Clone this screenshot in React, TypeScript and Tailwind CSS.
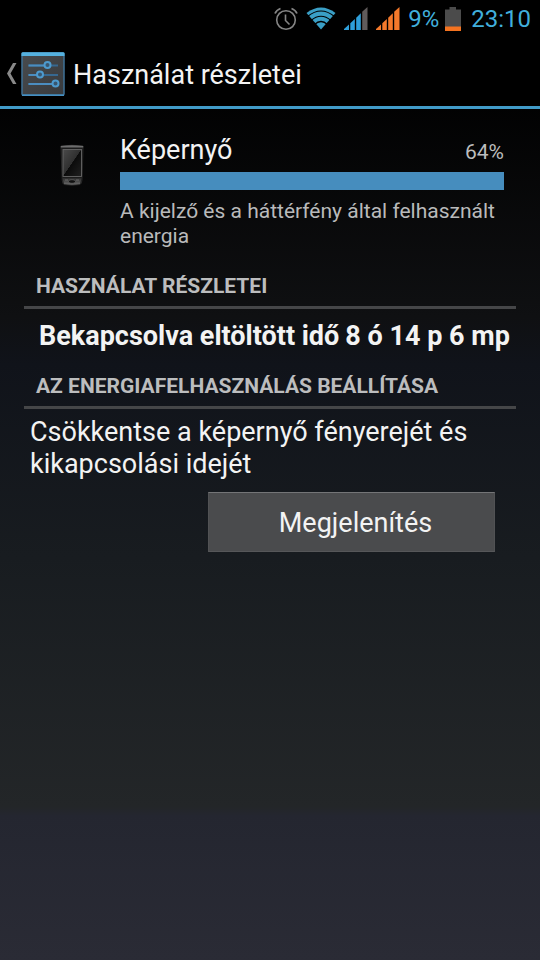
import type { ReactNode } from "react";

function AlarmIcon() {
  return (
    <svg className="h-6 w-6" viewBox="0 0 24 24" fill="none" stroke="#858585" strokeWidth="1.6" aria-hidden="true">
      <circle cx="12" cy="13" r="9.3" />
      <path d="M11.5 7.5v6l4 4" />
      <path d="M1 6.5Q2.500 3 6.500 1.500M23 6.500Q21.500 3 17.500 1.500" strokeWidth="1.8" />
    </svg>
  );
}

function WifiIcon() {
  return (
    <svg className="h-6 w-[30px]" viewBox="0 0 30 24" aria-hidden="true">
      <path d="M.5 6Q15-5 29.500 6L15 22.500Z" fill="#3a9fc6" />
      <g fill="none" stroke="#000" strokeWidth="1.200">
        <path d="M1.500 9.500Q15-1.500 28.500 9.500" />
        <path d="M5 13.500Q15 5 25 13.500" />
        <path d="M8.500 17.500Q15 11.500 21.500 17.500" />
      </g>
    </svg>
  );
}

function SignalIcon({ color, last }: { color: string; last: string }) {
  return (
    <svg className="h-6 w-6" viewBox="0 0 24 24" aria-hidden="true">
      <path d="M0 23V22L5 17.500V23Z" fill={color} />
      <path d="M6.300 23V16.300L10.800 12V23Z" fill={color} />
      <path d="M12.200 23V10.700L16.800 6.200V23Z" fill={color} />
      <path d="M18.200 23V4.800L23.500 0V23Z" fill={last} />
    </svg>
  );
}

function BatteryIcon() {
  return (
    <svg className="h-6 w-4" viewBox="0 0 16 24" aria-hidden="true">
      <path d="M0 2.500H4.500V0H11V2.500H16V24H0Z" fill="#4b4b4b" />
      <path d="M0 19.500H16V24H0Z" fill="#f47320" />
    </svg>
  );
}

function SettingsIcon() {
  return (
    <svg className="h-11 w-11" viewBox="0 0 44 44" aria-hidden="true">
      <defs>
        <linearGradient id="panel" x1="0" y1="0" x2="1" y2="1">
          <stop offset="0" stopColor="#484b4e" />
          <stop offset="1" stopColor="#383a3d" />
        </linearGradient>
      </defs>
      <rect x="1" y="1" width="42" height="42" rx="1" fill="url(#panel)" stroke="#3f7197" strokeWidth="1.500" />
      <path d="M.5 4V1.500Q.5 .3 2 .3H42Q43.500 .3 43.500 1.500V4Z" fill="#55b1df" />
      <path d="M1 43.200H43" stroke="#458fc2" strokeWidth="1.400" />
      <g stroke="#376890" strokeWidth="1.800">
        <path d="M7.500 13.500H37M7.500 23H37M7.500 32H37" />
      </g>
      <g stroke="#4b8dc0" strokeWidth="1.800">
        <path d="M7.500 13.500H24M7.500 23H16M7.500 32H32" />
      </g>
      <g fill="#39566f" stroke="#4d9ace" strokeWidth="2">
        <circle cx="26.500" cy="13" r="3" />
        <circle cx="19" cy="22.500" r="3" />
        <circle cx="34.500" cy="31.500" r="3" />
      </g>
    </svg>
  );
}

function PhoneIcon() {
  return (
    <svg className="h-11 w-6" viewBox="0 0 24 44" aria-hidden="true">
      <defs>
        <linearGradient id="screen" x1="0" y1="0" x2="1" y2="1">
          <stop offset="0" stopColor="#4a4a4a" />
          <stop offset=".49" stopColor="#303030" />
          <stop offset=".5" stopColor="#0b0b0b" />
          <stop offset="1" stopColor="#202020" />
        </linearGradient>
        <linearGradient id="base" x1="0" y1="0" x2="0" y2="1">
          <stop offset="0" stopColor="#2a2a2a" />
          <stop offset="1" stopColor="#6a6a6a" />
        </linearGradient>
      </defs>
      <path d="M1 2Q12 .5 23 2V5L22 36Q21.500 40 20 40.500Q12 42 4 40.500Q2.500 40 2.200 36L1 5Z" fill="#1c1c1c" stroke="#2c2c2c" strokeWidth=".8" />
      <path d="M.8 2Q12 .5 23.200 2V3.500H.8Z" fill="#6d6d6d" />
      <rect x="3" y="5.500" width="18.500" height="27" fill="url(#screen)" stroke="#666" strokeWidth=".9" />
      <path d="M2.500 34H21.500L20 40Q12 41.500 4 40Z" fill="url(#base)" />
      <ellipse cx="12" cy="37.500" rx="3.500" ry="1.800" fill="#111" stroke="#777" strokeWidth=".5" />
      <path d="M5 36H8M16 36H19" stroke="#777" strokeWidth=".8" />
    </svg>
  );
}

function SectionTitle({ children }: { children: ReactNode }) {
  return (
    <h2 className="mx-6 h-10 border-b-3 border-[#454648] px-3 text-[21px] leading-[34px] font-bold text-[#bcbdbe]">
      {children}
    </h2>
  );
}

export default function App() {
  return (
    <div className="flex min-h-screen flex-col bg-[linear-gradient(to_bottom,#000_8%,#0f1012_33%,#10131a_38%,#181c20_58%,#232628_84%,#242630_85%,#2a2b35_100%)] font-['Roboto','Liberation_Sans',sans-serif] text-[#f3f3f3]">
      <div className="flex h-[38px] items-center justify-end bg-black pr-[9px] text-[24px] text-[#41afdc]">
        <div className="flex items-center gap-2">
          <AlarmIcon />
          <WifiIcon />
          <SignalIcon color="#2e9fda" last="#605b5b" />
          <SignalIcon color="#f4792b" last="#f4792b" />
          <div className="flex items-center gap-[6px]">
            <span>9%</span>
            <BatteryIcon />
          </div>
        </div>
        <time className="ml-[10px]">23:10</time>
      </div>

      <header className="flex h-[71px] items-center border-b-3 border-[#419bc8] bg-black pt-1 pl-[6px]">
        <button type="button" aria-label="Vissza" className="flex items-center gap-1">
          <svg className="h-6 w-[11px]" viewBox="0 0 11 24" aria-hidden="true">
            <path d="M7 1H10.500L4.500 11.500L10.500 22H7L1 11.500Z" fill="#898989" />
          </svg>
          <SettingsIcon />
        </button>
        <h1 className="ml-2 pt-[2px] text-[27px]">Használat részletei</h1>
      </header>

      <main className="flex flex-col">
        <section className="flex pt-6 pr-9 pl-[60px]">
          <div className="w-[60px] shrink-0 pt-[11px]">
            <PhoneIcon />
          </div>
          <div className="min-w-0 flex-1">
            <div className="flex h-[39px] items-baseline justify-between">
              <h2 className="text-[27px] leading-[34px]">Képernyő</h2>
              <span className="text-[21px] leading-8 text-[#bcbdbe]">64%</span>
            </div>
            <div className="h-[18px] bg-[#468dbe]" />
            <p className="mt-[9px] text-[21px] leading-[25px] text-[#b9babb]">
              A kijelző és a háttérfény által felhasznált energia
            </p>
          </div>
        </section>

        <div className="pt-5">
          <SectionTitle>HASZNÁLAT RÉSZLETEI</SectionTitle>
          <p className="flex h-[60px] gap-[6px] pt-[10px] pl-[39px] text-[27px] leading-[34px] font-bold whitespace-nowrap">
            <span>Bekapcsolva eltöltött idő</span>
            <span>8 ó 14 p 6 mp</span>
          </p>
        </div>

        <div>
          <SectionTitle>AZ ENERGIAFELHASZNÁLÁS BEÁLLÍTÁSA</SectionTitle>
          <p className="px-[30px] pt-[7px] text-[27px] leading-8">Csökkentse a képernyő fényerejét és kikapcsolási idejét</p>
          <div className="flex justify-end pt-3 pr-[45px]">
            <button type="button" className="h-[60px] w-[287px] border border-t-[#747577] border-r-[#515254] border-b-[#565759] border-l-[#515254] bg-[#4a4b4d] pt-[2px] pl-2 text-[27px]">
              Megjelenítés
            </button>
          </div>
        </div>
      </main>
    </div>
  );
}
